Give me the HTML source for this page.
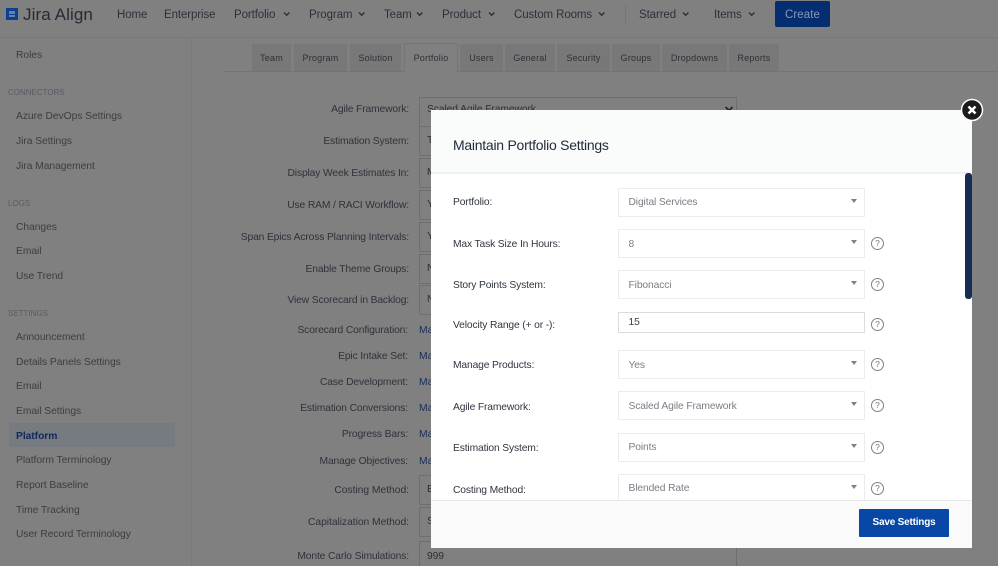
<!DOCTYPE html>
<html><head><meta charset="utf-8"><style>
html,body{margin:0;padding:0;width:998px;height:566px;overflow:hidden;background:#808080}
body{position:relative;font-family:"Liberation Sans",sans-serif;color:#30353e}
.t,.b,.r{position:absolute;white-space:nowrap}
.t{line-height:14px;font-size:10.3px;letter-spacing:-.05px}
.r{line-height:14px;font-size:10.3px;letter-spacing:-.14px;right:589px;color:#2e323a;margin-top:2px}
.n{font-size:11.5px;letter-spacing:-.1px;color:#2b303a}
.s{color:#3a3d42;margin-top:2px}
.h{font-size:8px;letter-spacing:0;color:#575c63;margin-top:1px}
.tab{position:absolute;top:44px;height:27px;background:#787878;font-size:9px;letter-spacing:.2px;line-height:29px;text-align:center;color:#2d3038}
.f{position:absolute;left:419px;width:316px;height:28px;border:1px solid #6f6f6f;line-height:28px;font-size:10.3px;text-indent:7px;color:#2c2f36;letter-spacing:-.1px}
.a{position:absolute;left:419px;font-size:10.3px;line-height:14px;color:#1a3058;margin-top:2px}
#m{position:absolute;left:431px;top:110px;width:541px;height:438px;background:#fff;overflow:hidden}
#mh{position:absolute;left:0;top:0;width:541px;height:62px;background:#fafbfb;border-bottom:2px solid #f0f0f0}
#mf{position:absolute;left:0;top:390px;width:541px;height:48px;background:#fafafa;border-top:1px solid #e6e6e6}
.ml{position:absolute;left:22px;font-size:10.3px;letter-spacing:-.15px;line-height:14px;color:#30353f;margin-top:2px}
.sel{position:absolute;left:187px;width:245px;height:27px;border:1px solid #ececec;line-height:30px;font-size:10.3px;letter-spacing:-.13px;text-indent:9.5px;color:#7a7e85;background:#fff}
.sel:after{content:"";position:absolute;top:10px;right:7px;border:3px solid transparent;border-top:4px solid #808080;border-bottom:0}
.sel.in:after{display:none}
.q{position:absolute;left:440px;width:11px;height:11px;border:1px solid #808080;border-radius:50%;font-size:8.5px;line-height:11px;text-align:center;color:#777}
</style></head><body>

<!-- top nav -->
<div class="b" style="left:0;top:37px;width:998px;height:1px;background:#777"></div>
<svg class="b" style="left:6px;top:8px" width="13" height="13" viewBox="0 0 13 13"><rect width="12" height="12" fill="#0a3f92"/><rect x="3" y="3" width="6" height="3" fill="#6d7f9c"/><rect x="3" y="7" width="6" height="2" fill="#6d7f9c"/></svg>
<div class="t" style="left:23px;top:6px;font-size:17px;line-height:18px;letter-spacing:.1px;color:#252a35">Jira Align</div>
<div class="t n" style="left:117px;top:8px">Home</div>
<div class="t n" style="left:164px;top:8px">Enterprise</div>
<div class="t n" style="left:234px;top:8px">Portfolio</div>
<div class="t n" style="left:309px;top:8px">Program</div>
<div class="t n" style="left:384px;top:8px">Team</div>
<div class="t n" style="left:442px;top:8px">Product</div>
<div class="t n" style="left:514px;top:8px">Custom Rooms</div>
<div class="t n" style="left:639px;top:8px">Starred</div>
<div class="t n" style="left:714px;top:8px">Items</div>
<svg class="b" style="left:0;top:0" width="998" height="37" fill="none" stroke="#2b303a" stroke-width="1.4">
<path d="M284 12.500l2.700 2.700 2.700-2.700M359 12.500l2.700 2.700 2.700-2.700M417 12.500l2.700 2.700 2.700-2.700M489 12.500l2.700 2.700 2.700-2.700M599 12.500l2.700 2.700 2.700-2.700M683 12.500l2.700 2.700 2.700-2.700M749 12.500l2.700 2.700 2.700-2.700"/>
<path d="M625.500 5v19" stroke="#747474" stroke-width="1"/></svg>
<div class="b" style="left:775px;top:1px;width:55px;height:26px;background:#052e70;border-radius:2px;color:#8497b8;font-size:11.500px;line-height:28px;text-align:center;letter-spacing:.1px">Create</div>

<!-- sidebar -->
<div class="b" style="left:191px;top:38px;width:1px;height:528px;background:#7a7a7a"></div>
<div class="b" style="left:9px;top:423px;width:166px;height:24px;background:#757b81"></div>
<div class="t s" style="left:16px;top:47px">Roles</div>
<div class="t h" style="left:8px;top:85px">CONNECTORS</div>
<div class="t s" style="left:16px;top:108px">Azure DevOps Settings</div>
<div class="t s" style="left:16px;top:133px">Jira Settings</div>
<div class="t s" style="left:16px;top:158px">Jira Management</div>
<div class="t h" style="left:8px;top:196px">LOGS</div>
<div class="t s" style="left:16px;top:219px">Changes</div>
<div class="t s" style="left:16px;top:243px">Email</div>
<div class="t s" style="left:16px;top:268px">Use Trend</div>
<div class="t h" style="left:8px;top:306px">SETTINGS</div>
<div class="t s" style="left:16px;top:329px">Announcement</div>
<div class="t s" style="left:16px;top:354px">Details Panels Settings</div>
<div class="t s" style="left:16px;top:378px">Email</div>
<div class="t s" style="left:16px;top:403px">Email Settings</div>
<div class="t" style="left:16px;top:430px;font-weight:bold;color:#10295a">Platform</div>
<div class="t s" style="left:16px;top:452px">Platform Terminology</div>
<div class="t s" style="left:16px;top:477px">Report Baseline</div>
<div class="t s" style="left:16px;top:502px">Time Tracking</div>
<div class="t s" style="left:16px;top:526px">User Record Terminology</div>

<!-- tabs -->
<div class="b" style="left:224px;top:71px;width:774px;height:1px;background:#747474"></div>
<div class="tab" style="left:252px;width:39px">Team</div>
<div class="tab" style="left:294px;width:53px">Program</div>
<div class="tab" style="left:350px;width:51px">Solution</div>
<div class="tab" style="left:404px;top:43px;width:52px;height:28px;background:#808080;border:1px solid #757575;border-bottom:1px solid #808080;line-height:29px">Portfolio</div>
<div class="tab" style="left:460px;width:43px">Users</div>
<div class="tab" style="left:505px;width:50px">General</div>
<div class="tab" style="left:557px;width:53px">Security</div>
<div class="tab" style="left:612px;width:48px">Groups</div>
<div class="tab" style="left:662px;width:65px">Dropdowns</div>
<div class="tab" style="left:729px;width:50px">Reports</div>

<!-- background form -->
<div class="r" style="top:101px">Agile Framework:</div>
<div class="r" style="top:133px">Estimation System:</div>
<div class="r" style="top:165px">Display Week Estimates In:</div>
<div class="r" style="top:197px">Use RAM / RACI Workflow:</div>
<div class="r" style="top:229px">Span Epics Across Planning Intervals:</div>
<div class="r" style="top:261px">Enable Theme Groups:</div>
<div class="r" style="top:292px">View Scorecard in Backlog:</div>
<div class="r" style="top:322px;right:590px">Scorecard Configuration:</div>
<div class="r" style="top:348px;right:590px">Epic Intake Set:</div>
<div class="r" style="top:374px;right:590px">Case Development:</div>
<div class="r" style="top:400px;right:590px">Estimation Conversions:</div>
<div class="r" style="top:426px;right:590px">Progress Bars:</div>
<div class="r" style="top:453px;right:590px">Manage Objectives:</div>
<div class="r" style="top:482px;letter-spacing:-.02px">Costing Method:</div>
<div class="r" style="top:514px;letter-spacing:-.04px">Capitalization Method:</div>
<div class="r" style="top:548px">Monte Carlo Simulations:</div>
<div class="f" style="top:97px;line-height:24px">Scaled Agile Framework</div>
<svg class="b" style="left:724px;top:105px" width="10" height="8" fill="none" stroke="#222" stroke-width="1.6"><path d="M1.500 2l3.500 3.500 3.500-3.500"/></svg>
<div class="f" style="top:126px">T</div>
<div class="f" style="top:158px">M</div>
<div class="f" style="top:190px">Y</div>
<div class="f" style="top:222px">Y</div>
<div class="f" style="top:254px">N</div>
<div class="f" style="top:285px">N</div>
<div class="a" style="top:322px">Ma</div>
<div class="a" style="top:348px">Ma</div>
<div class="a" style="top:374px">Ma</div>
<div class="a" style="top:400px">Ma</div>
<div class="a" style="top:426px">Ma</div>
<div class="a" style="top:453px">Ma</div>
<div class="f" style="top:475px">B</div>
<div class="f" style="top:507px">S</div>
<div class="f" style="top:541px;height:30px;line-height:29px">999</div>

<!-- modal -->
<div id="m">
  <div id="mh"></div>
  <div class="t" style="left:22px;top:28px;font-size:14px;letter-spacing:-.26px;color:#1f2a3a">Maintain Portfolio Settings</div>
  <div class="ml" style="top:84px">Portfolio:</div>
  <div class="sel" style="top:78px;line-height:28px">Digital Services</div>
  <div class="ml" style="top:126px">Max Task Size In Hours:</div>
  <div class="sel" style="top:119px">8</div><div class="q" style="top:127px">?</div>
  <div class="ml" style="top:167px">Story Points System:</div>
  <div class="sel" style="top:160px">Fibonacci</div><div class="q" style="top:168px">?</div>
  <div class="ml" style="top:207px">Velocity Range (+ or -):</div>
  <div class="sel in" style="top:202px;height:19px;line-height:20px;border-color:#dcdcdc;color:#3a3f47">15</div>
  <div class="q" style="top:208px">?</div>
  <div class="ml" style="top:247px">Manage Products:</div>
  <div class="sel" style="top:240px">Yes</div><div class="q" style="top:248px">?</div>
  <div class="ml" style="top:289px">Agile Framework:</div>
  <div class="sel" style="top:281px">Scaled Agile Framework</div><div class="q" style="top:289px">?</div>
  <div class="ml" style="top:330px">Estimation System:</div>
  <div class="sel" style="top:323px;line-height:28px">Points</div><div class="q" style="top:331px">?</div>
  <div class="ml" style="top:372px">Costing Method:</div>
  <div class="sel" style="top:364px;line-height:28px">Blended Rate</div><div class="q" style="top:372px">?</div>
  <div class="b" style="left:534px;top:63px;width:7px;height:126px;background:#172b53;border-radius:3px"></div>
  <div id="mf"></div>
  <div class="b" style="left:428px;top:399px;width:90px;height:28px;background:#0747a6;border-radius:1px;color:#fff;font-size:10px;font-weight:bold;line-height:28px;text-align:center;letter-spacing:-.2px">Save Settings</div>
</div>

<!-- close -->
<svg class="b" style="left:960px;top:98px" width="24" height="24" viewBox="0 0 24 24"><circle cx="12" cy="12" r="10.500" fill="#1b1b1b" stroke="#fff" stroke-width="1.500"/><path d="M8.500 8.500l7 7M15.500 8.500l-7 7" stroke="#fff" stroke-width="2.600"/></svg>
</body></html>
